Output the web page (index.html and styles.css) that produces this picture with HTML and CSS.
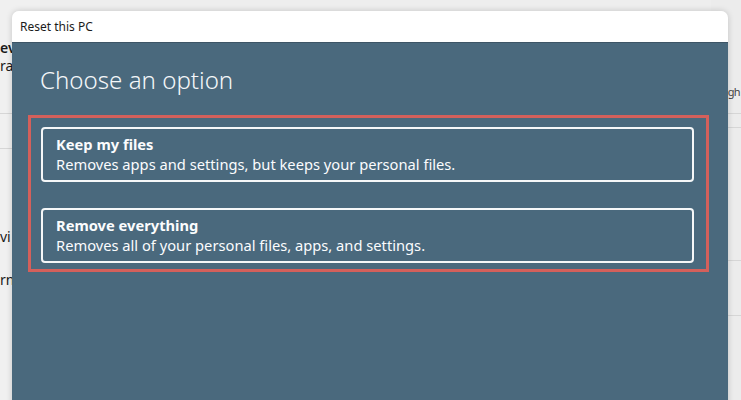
FILE: index.html
```html
<!DOCTYPE html>
<html>
<head>
<meta charset="utf-8">
<link rel="stylesheet" href="styles.css">
</head>
<body>
<div class="app">
  <div class="app-left">
    <div class="frag f-ev">ev</div>
    <div class="frag f-ra">ra</div>
    <div class="hline l1"></div>
    <div class="hline l2"></div>
    <div class="frag f-vi">vi</div>
    <div class="frag f-rn">rn</div>
  </div>
  <div class="app-right">
    <div class="frag f-gh">gh</div>
    <div class="hline r1"></div>
    <div class="hline r2"></div>
    <div class="hline r3"></div>
    <div class="hline r4"></div>
  </div>
</div>

<div class="dialog">
  <div class="titlebar">Reset this PC</div>
  <div class="content">
    <h1 class="heading">Choose an option</h1>
    <div class="highlight">
      <div class="option">
        <div class="opt-title">Keep my files</div>
        <div class="opt-desc">Removes apps and settings, but keeps your personal files.</div>
      </div>
      <div class="option">
        <div class="opt-title">Remove everything</div>
        <div class="opt-desc">Removes all of your personal files, apps, and settings.</div>
      </div>
    </div>
  </div>
</div>
</body>
</html>
```
FILE: styles.css
```css
html, body {
  margin: 0;
  padding: 0;
  width: 741px;
  height: 400px;
  overflow: hidden;
}
body {
  background: #eeeeee;
  font-family: "Noto Sans", "Open Sans", sans-serif;
  position: relative;
}
.app {
  display: flex;
  justify-content: space-between;
  height: 400px;
}
.app-left {
  width: 40px;
  display: flex;
  flex-direction: column;
  background: #f0f0f0;
}
.app-right {
  width: 30px;
  display: flex;
  flex-direction: column;
  align-items: flex-end;
  background: #ececec;
}
.frag {
  font-size: 14px;
  color: #1a1a1a;
  line-height: 18px;
}
.f-ev { margin-top: 39px; font-weight: 600; }
.hline { height: 1px; background: #d6d6d6; width: 100%; }
.l1 { margin-top: 38px; }
.l2 { margin-top: 34px; }
.f-vi { margin-top: 79px; }
.f-rn { margin-top: 25px; }
.f-gh { margin-top: 83px; font-size: 11px; letter-spacing: -0.6px; padding-right: 1px; color: #444; }
.r1 { margin-top: 12px; }
.r2 { margin-top: 13px; }
.r3 { margin-top: 132px; }
.r4 { margin-top: 54px; }

.dialog {
  position: absolute;
  left: 12px;
  top: 11px;
  width: 716px;
  height: 400px;
  border-radius: 7px 7px 0 0;
  overflow: hidden;
  box-shadow: 0 0 6px rgba(0,0,0,0.18);
  display: flex;
  flex-direction: column;
}
.titlebar {
  height: 32px;
  background: #ffffff;
  font-size: 12px;
  color: #1b1b1b;
  padding-left: 8px;
  line-height: 31px;
  border-bottom: 1px solid #3d5566;
  box-sizing: border-box;
}
.content {
  flex: 1;
  background: #4a697d;
  padding: 20px 0 0 16px;
}
.heading {
  margin: 0;
  font-weight: 300;
  font-size: 24.1px;
  line-height: 34px;
  color: #f4f7f9;
  padding-left: 12px;
}
.highlight {
  margin-top: 18px;
  border: 3px solid #d4605b;
  padding: 9px 12px 6px 10px;
  display: flex;
  flex-direction: column;
  gap: 26px;
  width: 653px;
}
.option {
  border: 2px solid #f5f7f8;
  border-radius: 4px;
  padding: 5px 13px 0;
  box-sizing: border-box;
  height: 55px;
  color: #fbfcfd;
}
.opt-title {
  font-weight: 700;
  font-size: 14.7px;
  line-height: 20px;
}
.opt-desc {
  font-size: 14.7px;
  line-height: 20px;
}
```
